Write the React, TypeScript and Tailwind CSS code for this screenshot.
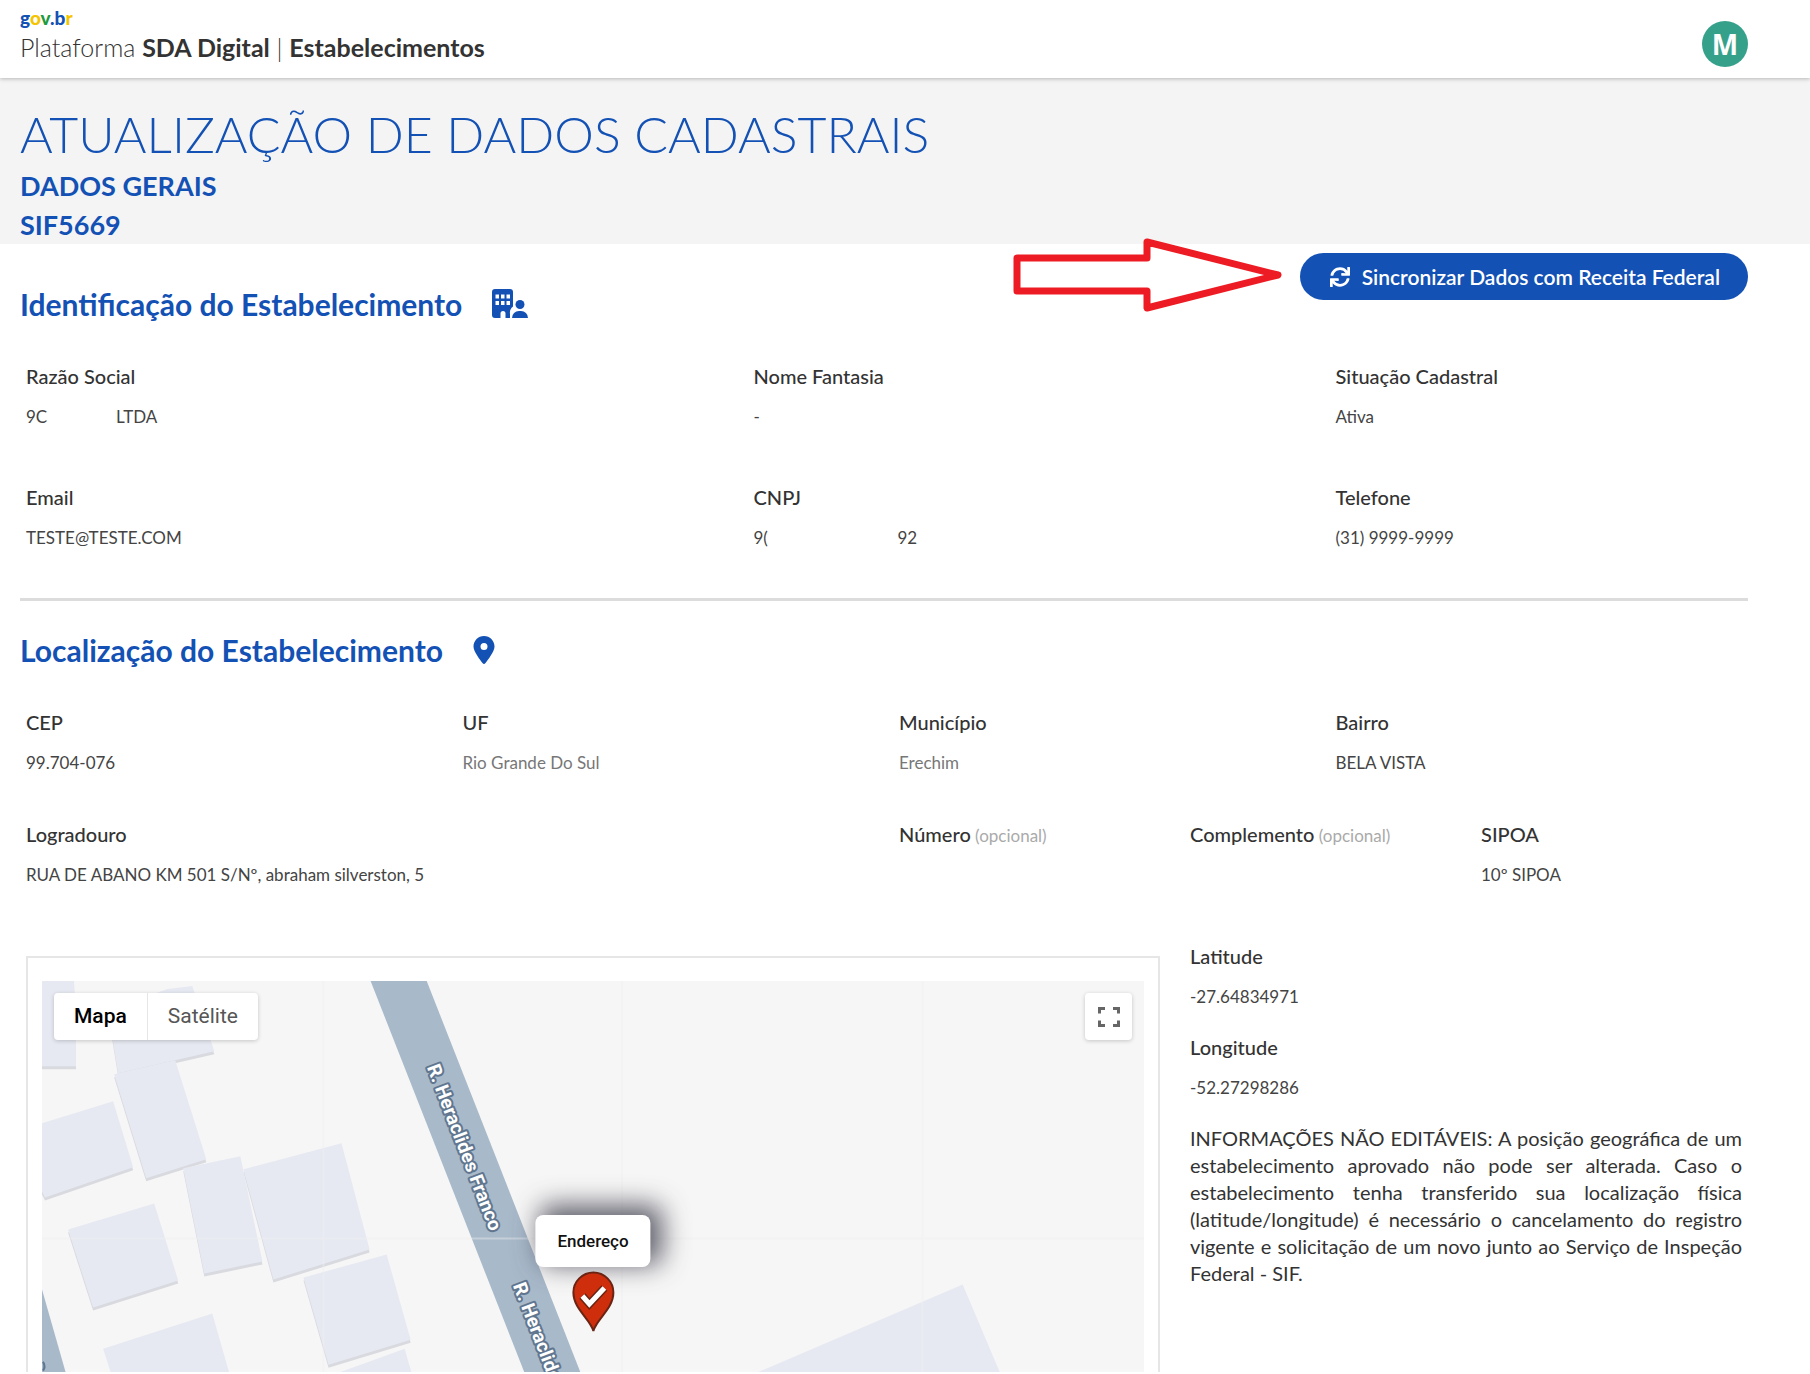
import type { ReactNode } from "react";
import { FaSync } from "react-icons/fa";
import { FaLocationDot } from "react-icons/fa6";

interface FieldProps {
  label: string;
  span: string;
  optional?: boolean;
  muted?: boolean;
  children?: ReactNode;
}

const Field = ({ label, span, optional, muted, children }: FieldProps) => (
  <div className={span}>
    <dt className="text-[20px] leading-6 font-medium text-[#333]">
      {label}
      {optional && <span className="text-[17px] font-normal text-[#aaa]"> (opcional)</span>}
    </dt>
    <dd className={`mt-[17px] flex h-6 text-[17px] leading-6 ${muted ? "text-[#777]" : "text-[#444]"}`}>
      {children}
    </dd>
  </div>
);

const SectionTitle = ({ title, icon }: { title: string; icon: ReactNode }) => (
  <h2 className="flex items-center gap-[30px] text-[30px] leading-9 font-bold text-[#1351b4]">
    {title}
    {icon}
  </h2>
);

const BuildingUserIcon = () => (
  <svg width="36" height="30" viewBox="0 0 36 30" fill="currentColor" aria-hidden="true">
    <path
      fillRule="evenodd"
      d="M3 0h15a3 3 0 0 1 3 3v14.500a8 8 0 0 0-3 7.500v4h-4.500v-4.500a2.500 2.500 0 0 0-5 0v4.500H3a3 3 0 0 1-3-3V3a3 3 0 0 1 3-3ZM3.500 5.500v4h3.500v-4ZM9 5.500v4h3.500v-4ZM14.500 5.500v4H18v-4ZM3.500 12v4h3.500v-4ZM9 12v4h3.500v-4ZM14.500 12v4H18v-4Z"
    />
    <circle cx="28" cy="15.500" r="4.500" />
    <path d="M20 29a7 7 0 0 1 7-7h2a7 7 0 0 1 7 7Z" />
  </svg>
);

const PointerArrow = () => (
  <svg
    className="pointer-events-none absolute top-[-17px] right-full mr-4"
    width="272"
    height="78"
    viewBox="0 0 272 78"
    fill="none"
    aria-hidden="true"
  >
    <path
      d="M5 22H135V6L266 39L135 72V55H5Z"
      stroke="#ed1c24"
      strokeWidth="7"
      strokeLinejoin="round"
    />
  </svg>
);

// building footprints, in map pixels
const buildings = [
  "0,0 32,0 34,85 0,85",
  "66,30 125,8 150,5 172,70 76,92",
  "72,93 133,79 164,178 104,197",
  "0,142 71,120 91,186 3,216 0,210",
  "26,248 112,222 136,299 51,326",
  "141,187 198,175 220,280 162,292",
  "201,188 299,162 327,268 231,298",
  "261,296 344,273 368,358 286,383",
  "61,367 170,332 188,395 70,395",
  "285,395 362,367 370,395",
  "704,395 919,303 958,395",
];

const StreetMap = () => (
  <svg
    className="h-full w-full"
    viewBox="0 0 1100 391"
    preserveAspectRatio="xMidYMin slice"
    role="img"
    aria-label="Mapa do endereço"
  >
    <rect width="1100" height="391" fill="#f6f6f6" />
    <g fill="#d9dae0">
      {buildings.slice(0, 8).map((points) => (
        <polygon key={points} points={points} transform="translate(0 3)" />
      ))}
    </g>
    <g fill="#e7e9f2">
      {buildings.map((points) => (
        <polygon key={points} points={points} />
      ))}
    </g>
    <polygon points="328,0 384,0 538,392 482,392" fill="#a8b9ca" />
    <polygon points="0,308 24,392 0,392" fill="#a8b9ca" />
    <path d="M281 0V391M579 0V391M879 0V391M0 257H1100" stroke="#efefef" strokeOpacity="0.400" strokeWidth="2" />
    <path d="M1 380q3 5 0 9" stroke="#5f7590" strokeWidth="2" fill="none" />
    <g
      className="font-['Roboto',sans-serif] text-[19px] font-bold"
      fill="#fff"
      stroke="#60768f"
      strokeWidth="4"
      strokeLinejoin="round"
      paintOrder="stroke"
    >
      <text transform="translate(384 86) rotate(69)">R. Heraclides Franco</text>
      <text transform="translate(470 304) rotate(69)">R. Heraclides Franco</text>
    </g>
  </svg>
);

const MapPin = () => (
  <svg className="mt-1" width="44" height="62" viewBox="0 0 44 62" aria-hidden="true">
    <path
      d="M22 60C19 48 2 38 2 21.500a20 20 0 0 1 40 0C42 38 25 48 22 60Z"
      fill="#cf2e0c"
      stroke="#6b2413"
      strokeWidth="2"
    />
    <path d="M11 25l7 8L33 17" fill="none" stroke="#6b2413" strokeWidth="8" />
    <path d="M11 25l7 8L33 17" fill="none" stroke="#fff" strokeWidth="5" />
  </svg>
);

const AddressMap = () => (
  <div className="col-span-8 mt-3 border-2 border-b-0 border-[#e6e6e6] px-[14px] pt-[23px]">
    <div className="relative h-[391px] overflow-hidden">
      <StreetMap />

      <div className="absolute top-3 left-3 flex h-[47px] rounded-sm bg-white font-['Roboto',sans-serif] text-[21px] shadow-[0_1px_4px_rgba(0,0,0,0.2)]">
        <button type="button" className="border-r border-[#e6e6e6] px-5 font-medium text-black">
          Mapa
        </button>
        <button type="button" className="px-5 text-[#565656]">
          Satélite
        </button>
      </div>

      <button
        type="button"
        aria-label="Tela cheia"
        className="absolute top-3 right-3 flex h-[47px] w-[47px] items-center justify-center rounded-sm bg-white shadow-[0_1px_4px_rgba(0,0,0,0.2)]"
      >
        <svg width="22" height="20" viewBox="0 0 22 20" fill="none" stroke="#666" strokeWidth="3" aria-hidden="true">
          <path d="M1.500 6.500V1.500H7M15 1.500h5.500v5M20.500 13.500v5H15M7 18.500H1.500v-5" />
        </svg>
      </button>

      <div className="absolute top-[234px] left-1/2 flex -translate-x-1/2 flex-col items-center">
        <div className="rounded-lg bg-white px-[22px] py-[14px] font-['Roboto',sans-serif] text-[17px] leading-6 font-medium text-[#111] shadow-[8px_-6px_26px_4px_rgba(60,60,75,0.8)]">
          Endereço
        </div>
        <MapPin />
      </div>
    </div>
  </div>
);

const Header = () => (
  <header className="relative flex items-end justify-between bg-white pt-2 pr-[62px] pb-[11px] pl-5 shadow-[0_1px_4px_rgba(0,0,0,0.25)]">
    <div>
      <a href="#" className="block text-[19px] leading-5 font-black text-[#1351b4]">
        g<span className="text-[#f5c400]">o</span>
        <span className="text-[#1f9a3c]">v</span>.b<span className="text-[#f5c400]">r</span>
      </a>
      <p className="pb-px text-[25px] leading-[38px] font-light text-[#333]">
        Plataforma <b className="font-bold">SDA Digital</b> | <b className="font-bold">Estabelecimentos</b>
      </p>
    </div>
    <button
      type="button"
      className="flex h-[46px] w-[46px] items-center justify-center rounded-full bg-[#36a18b] font-['Open_Sans',sans-serif] text-[28px] font-bold text-white"
    >
      M
    </button>
  </header>
);

const App = () => {
  return (
    <div className="bg-white font-['Lato',sans-serif]">
      <Header />

      <div className="bg-[#f4f4f4] pt-[26px] pl-5 text-[#1351b4]">
        <h1 className="pb-[2px] text-[50px] leading-[60px] font-light">ATUALIZAÇÃO DE DADOS CADASTRAIS</h1>
        <p className="text-[27px] leading-[39px] font-bold">DADOS GERAIS</p>
        <p className="text-[27px] leading-[39px] font-bold">SIF5669</p>
      </div>

      <main>
        <section>
          <div className="flex h-[78px] items-end justify-between pt-[9px] pr-[62px] pl-5">
            <SectionTitle title="Identificação do Estabelecimento" icon={<BuildingUserIcon />} />
            <div className="relative self-start">
              <PointerArrow />
              <button
                type="button"
                className="flex h-[47px] items-center gap-3 rounded-full bg-[#1351b4] pr-7 pl-[30px] text-[21px] font-semibold text-white"
              >
                <FaSync className="h-5 w-5" />
                Sincronizar Dados com Receita Federal
              </button>
            </div>
          </div>

          <dl className="mt-[42px] grid grid-cols-12 gap-x-[30px] gap-y-14 pr-[68px] pl-[26px]">
            <Field label="Razão Social" span="col-span-5">
              <span className="w-[90px]">9C</span>
              <span>LTDA</span>
            </Field>
            <Field label="Nome Fantasia" span="col-span-4">-</Field>
            <Field label="Situação Cadastral" span="col-span-3">Ativa</Field>
            <Field label="Email" span="col-span-5">TESTE@TESTE.COM</Field>
            <Field label="CNPJ" span="col-span-4">
              <span className="w-[144px]">9(</span>
              <span>92</span>
            </Field>
            <Field label="Telefone" span="col-span-3">(31) 9999-9999</Field>
          </dl>
        </section>

        <hr className="mt-12 mr-[62px] ml-5 border-t-3 border-[#dcdcdc]" />

        <section>
          <div className="mt-[31px] pl-5">
            <SectionTitle title="Localização do Estabelecimento" icon={<FaLocationDot className="h-7 w-[22px]" />} />
          </div>

          <dl className="mt-[42px] grid grid-cols-12 gap-x-[30px] gap-y-[47px] pr-[68px] pl-[26px]">
            <Field label="CEP" span="col-span-3">99.704-076</Field>
            <Field label="UF" span="col-span-3" muted>Rio Grande Do Sul</Field>
            <Field label="Município" span="col-span-3" muted>Erechim</Field>
            <Field label="Bairro" span="col-span-3">BELA VISTA</Field>
            <Field label="Logradouro" span="col-span-6">
              RUA DE ABANO KM 501 S/Nº, abraham silverston, 5
            </Field>
            <Field label="Número" span="col-span-2 whitespace-nowrap" optional />
            <Field label="Complemento" span="col-span-2 whitespace-nowrap" optional />
            <Field label="SIPOA" span="col-span-2">10º SIPOA</Field>
          </dl>

          <div className="mt-[55px] grid grid-cols-12 items-start gap-x-[30px] pr-[68px] pl-[26px]">
            <AddressMap />
            <div className="col-span-4">
              <dl className="grid gap-y-[26px]">
                <Field label="Latitude" span="">-27.64834971</Field>
                <Field label="Longitude" span="">-52.27298286</Field>
              </dl>
              <p className="mt-[25px] text-justify text-[20px] leading-[27px] text-[#333]">
                INFORMAÇÕES NÃO EDITÁVEIS: A posição geográfica de um estabelecimento aprovado não pode ser
                alterada. Caso o estabelecimento tenha transferido sua localização física
                (latitude/longitude) é necessário o cancelamento do registro vigente e solicitação de um
                novo junto ao Serviço de Inspeção Federal - SIF.
              </p>
            </div>
          </div>
        </section>
      </main>
    </div>
  );
};

export default App;
